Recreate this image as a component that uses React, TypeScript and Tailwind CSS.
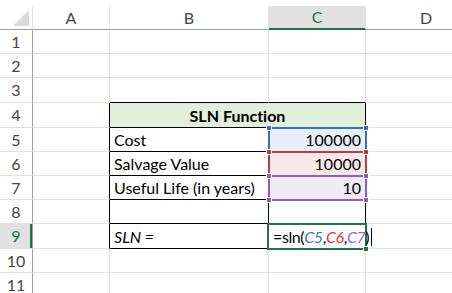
import type { ReactNode } from 'react';

const rowHeights = [24, 24, 25, 25, 24, 24, 24, 24, 25, 24, 24];

const grid = 'border-[#e1e1e1]';
const ink = 'border-black';

function Handle({ pos, color }: { pos: string; color: string }) {
  return <span className={`absolute z-20 h-[6px] w-[6px] border border-white ${pos} ${color}`} />;
}

function RefBox({ frame, fill, topHandle, bottomHandle }: { frame: string; fill: string; topHandle: string; bottomHandle: string }) {
  return (
    <div className={`absolute -left-px -top-px -right-[2px] -bottom-[2px] border-2 ${frame} ${fill}`}>
      <Handle pos="-left-[4px] -top-[4px]" color={topHandle} />
      <Handle pos="-right-[4px] -top-[4px]" color={topHandle} />
      <Handle pos="-left-[4px] -bottom-[4px]" color={bottomHandle} />
      <Handle pos="-right-[4px] -bottom-[4px]" color={bottomHandle} />
    </div>
  );
}

function Cell({ className = '', children }: { className?: string; children?: ReactNode }) {
  return <div className={`relative flex items-end pb-[1px] border-b border-r px-[4px] ${className}`}>{children}</div>;
}

function RowHead({ n, active = false }: { n: number; active?: boolean }) {
  return (
    <div
      className={`flex items-center justify-center border-b border-r text-[16px] ${grid} ${
        active ? 'bg-[#e1e1e1] text-[#217346] shadow-[inset_-2px_0_0_#217346]' : 'text-[#444]'
      }`}
      style={{ borderRightColor: '#9e9e9e' }}
    >
      {n}
    </div>
  );
}

function Row({ n, bBottom }: { n: number; bBottom: string }) {
  return (
    <>
      <RowHead n={n} />
      <Cell className={grid} />
      <Cell className={`${grid} ${bBottom === ink ? '!border-b-black' : ''}`} />
      <Cell className={`${grid} ${bBottom === ink ? '!border-b-black' : ''}`} />
      <Cell className={`${grid} border-r-0`} />
    </>
  );
}

export default function App() {
  return (
    <div className="h-[293px] w-[452px] overflow-hidden bg-white pt-[6px] font-['Lato','Liberation_Sans',sans-serif] text-[16px] leading-[20px] text-black [font-variant-ligatures:none]">
      <div
        className="grid grid-cols-[33px_77px_159px_97px_120px]"
        style={{ gridTemplateRows: `24px ${rowHeights.map((h) => `${h}px`).join(' ')}` }}
      >
        {/* header row */}
        <div className="relative border-b border-r border-b-[#9e9e9e] border-r-[#e1e1e1]">
          <div className="absolute left-[13px] top-[4px] h-[16px] w-[16px] bg-[#dadada] [clip-path:polygon(100%_0,100%_100%,0_100%)]" />
        </div>
        <div className="flex items-center justify-center border-b border-r border-b-[#9e9e9e] border-r-[#e1e1e1] text-[#444]">A</div>
        <div className="flex items-center justify-center border-b border-r border-b-[#9e9e9e] border-r-[#e1e1e1] text-[#444]">B</div>
        <div className="flex items-center justify-center border-b-[2px] border-r border-b-[#217346] border-r-[#e1e1e1] bg-[#e1e1e1] text-[#217346]">C</div>
        <div className="flex items-center justify-center border-b border-b-[#9e9e9e] text-[#444]">D</div>

        {/* rows 1-3 */}
        {[1, 2, 3].map((n) => (
          <Row key={n} n={n} bBottom={n === 3 ? ink : grid} />
        ))}

        {/* row 4 */}
        <RowHead n={4} />
        <Cell className={`${grid} !border-r-black`} />
        <Cell className={`col-span-2 justify-center bg-[#e2efda] font-bold ${ink}`}>SLN Function</Cell>
        <Cell className={`${grid} border-r-0`} />

        {/* row 5 */}
        <RowHead n={5} />
        <Cell className={`${grid} !border-r-black`} />
        <Cell className={ink}>Cost</Cell>
        <Cell className={`justify-end ${grid}`}>
          <RefBox frame="border-[#3a6ec2]" fill="bg-[#e8eff8]" topHandle="bg-[#3a6ec2]" bottomHandle="bg-[#c0393e]" />
          <span className="relative z-10">100000</span>
        </Cell>
        <Cell className={`${grid} border-r-0`} />

        {/* row 6 */}
        <RowHead n={6} />
        <Cell className={`${grid} !border-r-black`} />
        <Cell className={ink}>Salvage Value</Cell>
        <Cell className={`justify-end ${grid}`}>
          <RefBox frame="border-[#c0393e]" fill="bg-[#f8e9e9]" topHandle="bg-[#c0393e]" bottomHandle="bg-[#8a5fb8]" />
          <span className="relative z-10">10000</span>
        </Cell>
        <Cell className={`${grid} border-r-0`} />

        {/* row 7 */}
        <RowHead n={7} />
        <Cell className={`${grid} !border-r-black`} />
        <Cell className={ink}>Useful Life (in years)</Cell>
        <Cell className={`justify-end ${grid}`}>
          <RefBox frame="border-[#8a5fb8]" fill="bg-[#f0ebf6]" topHandle="bg-[#8a5fb8]" bottomHandle="bg-[#8a5fb8]" />
          <span className="relative z-10">10</span>
        </Cell>
        <Cell className={`${grid} border-r-0`} />

        {/* row 8 */}
        <RowHead n={8} />
        <Cell className={`${grid} !border-r-black`} />
        <Cell className={ink} />
        <Cell className={ink} />
        <Cell className={`${grid} border-r-0`} />

        {/* row 9 */}
        <RowHead n={9} active />
        <Cell className={`${grid} !border-r-black`} />
        <Cell className={`italic ${ink}`}>SLN =</Cell>
        <Cell className={`${ink} z-10 overflow-visible whitespace-nowrap px-[3px]`}>
          <div className="absolute -left-[2px] -top-[1px] -right-[2px] -bottom-[2px] border-2 border-[#217346]">
            <span className="absolute -bottom-[4px] -right-[4px] h-[6px] w-[6px] border border-white bg-[#217346]" />
          </div>
          <span className="relative z-10 flex items-center tracking-[-0.4px]">
            =sln(<span className="italic text-[#3a78d6]">C5</span>,<span className="italic text-[#e0363c]">C6</span>,
            <span className="italic text-[#8e68d0]">C7</span>)
            <span className="ml-[2px] inline-block h-[18px] w-px bg-black" />
          </span>
        </Cell>
        <Cell className={`${grid} border-r-0`} />

        {/* rows 10-11 */}
        {[10, 11].map((n) => (
          <Row key={n} n={n} bBottom={grid} />
        ))}
      </div>
    </div>
  );
}
